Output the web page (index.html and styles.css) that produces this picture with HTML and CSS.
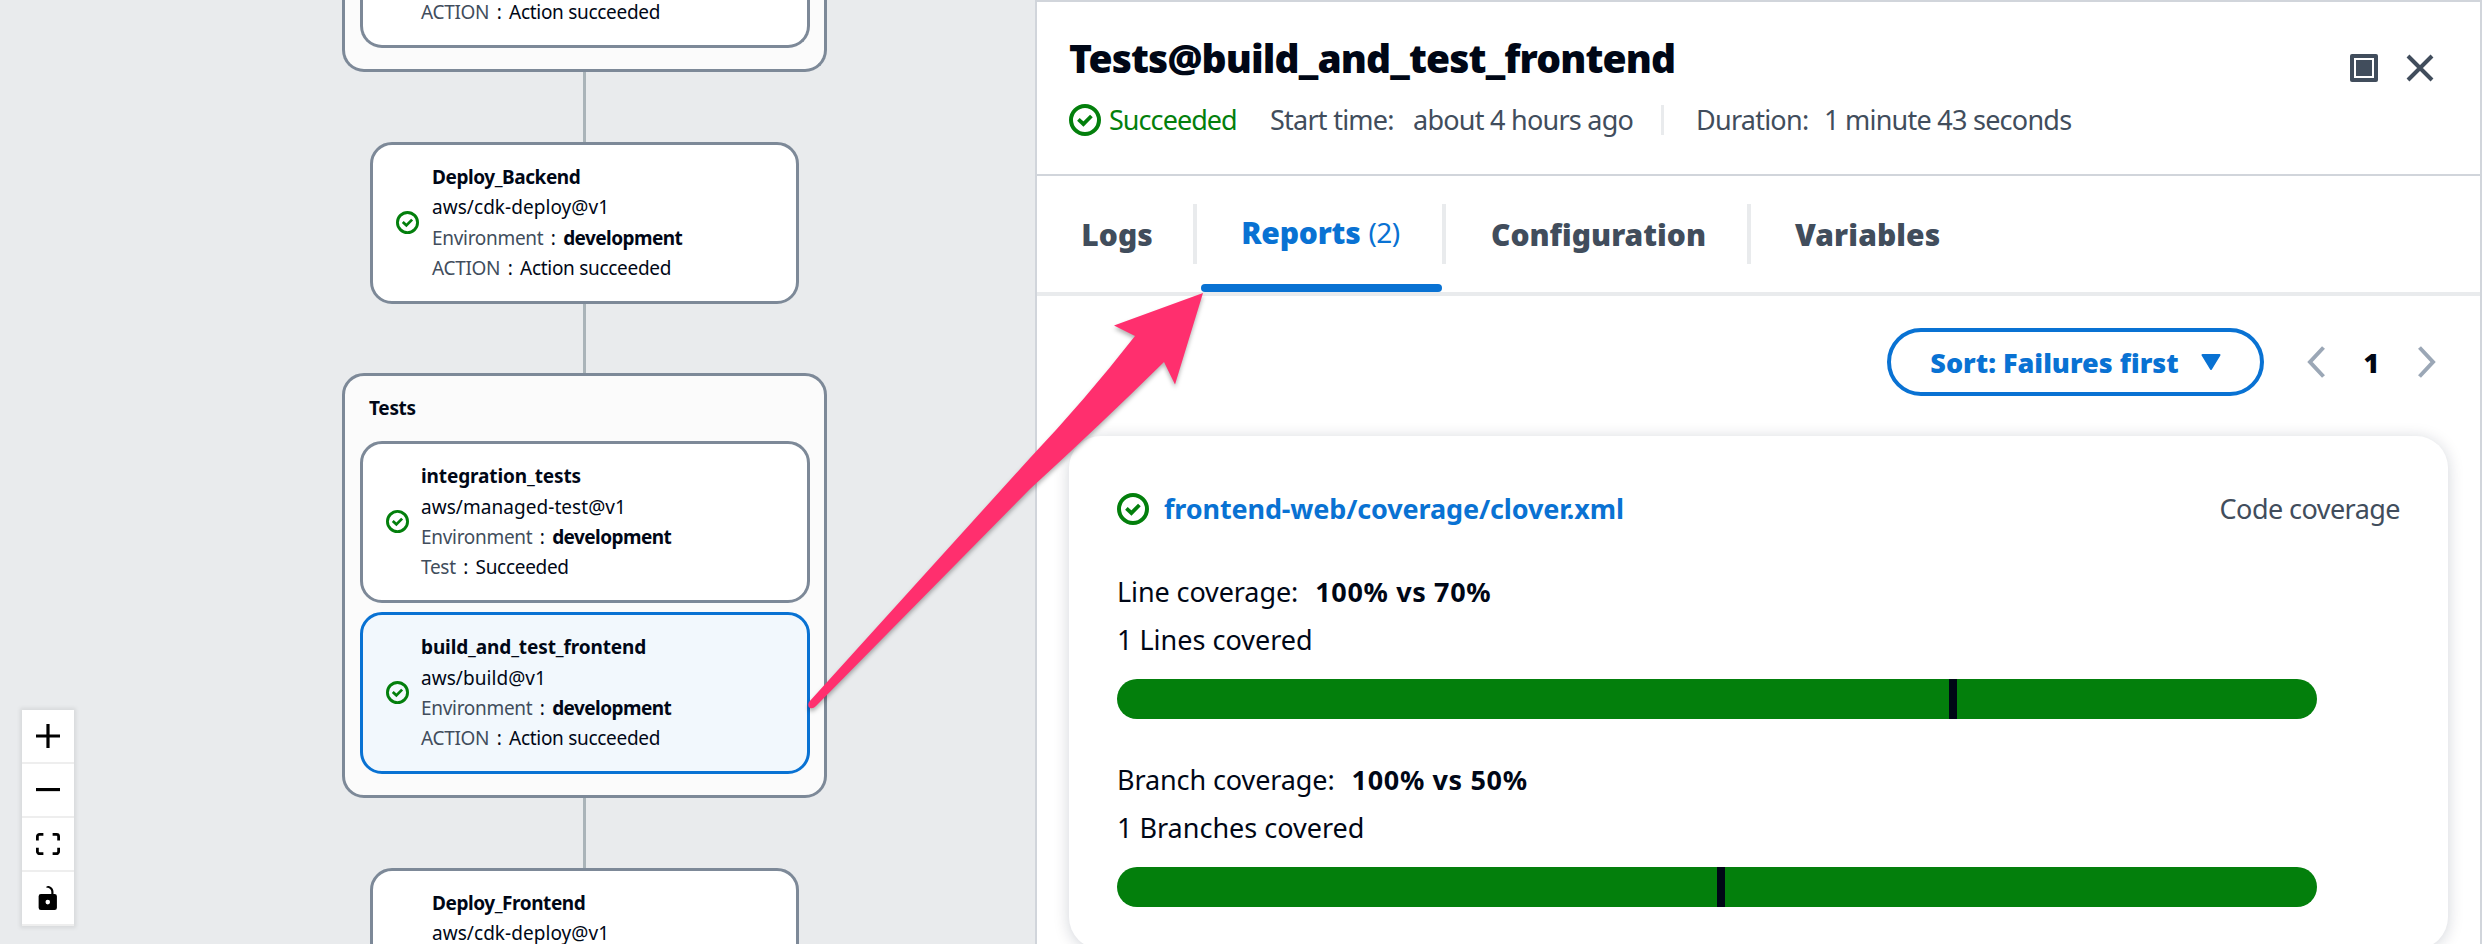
FILE: index.html
```html
<!DOCTYPE html>
<html lang="en">
<head>
    <meta charset="UTF-8">
    <meta name="viewport" content="width=device-width, initial-scale=1.0">
    <title>Workflow run - Tests@build_and_test_frontend</title>
    <link rel="stylesheet" href="styles.css">
</head>
<body>
    <svg class="symbols" width="0" height="0">
        <symbol id="success" viewBox="0 0 16 16">
            <circle cx="8" cy="8" r="7" fill="none" stroke="#037f0c" stroke-width="2"/>
            <path d="M4.700 7.700l2.500 2.300 4-4" fill="none" stroke="#037f0c" stroke-width="1.900"/>
        </symbol>
    </svg>

    <div class="graph">
        <div class="group group-clipped">
            <div class="node node-clipped">
                <div class="node-text">
                    <div><span class="key">ACTION</span><span class="colon">:</span>Action succeeded</div>
                </div>
            </div>
        </div>
        <div class="edge"></div>
        <div class="node node-single">
            <svg class="node-icon"><use href="#success"/></svg>
            <div class="node-text">
                <div class="name name-deploy">Deploy_Backend</div>
                <div class="action-id">aws/cdk-deploy@v1</div>
                <div><span class="key">Environment</span><span class="colon">:</span><b>development</b></div>
                <div><span class="key">ACTION</span><span class="colon">:</span>Action succeeded</div>
            </div>
        </div>
        <div class="edge edge-short"></div>
        <div class="group">
            <div class="group-title">Tests</div>
            <div class="node">
                <svg class="node-icon"><use href="#success"/></svg>
                <div class="node-text">
                    <div class="name">integration_tests</div>
                    <div class="action-id">aws/managed-test@v1</div>
                    <div><span class="key">Environment</span><span class="colon">:</span><b>development</b></div>
                    <div><span class="key">Test</span><span class="colon">:</span>Succeeded</div>
                </div>
            </div>
            <div class="node node-selected">
                <svg class="node-icon"><use href="#success"/></svg>
                <div class="node-text">
                    <div class="name">build_and_test_frontend</div>
                    <div class="action-id">aws/build@v1</div>
                    <div><span class="key">Environment</span><span class="colon">:</span><b>development</b></div>
                    <div><span class="key">ACTION</span><span class="colon">:</span>Action succeeded</div>
                </div>
            </div>
        </div>
        <div class="edge"></div>
        <div class="node node-single">
            <div class="node-text node-text-cut">
                <div class="name name-deploy">Deploy_Frontend</div>
                <div class="action-id">aws/cdk-deploy@v1</div>
            </div>
        </div>

        <div class="controls">
            <button><svg viewBox="0 0 32 32"><path d="M32 18.133H18.133V32h-4.266V18.133H0v-4.266h13.867V0h4.266v13.867H32z"/></svg></button>
            <button><svg viewBox="0 0 32 5"><path d="M0 0h32v4.2H0z"/></svg></button>
            <button><svg viewBox="0 0 32 30"><path d="M3.692 4.63c0-.53.4-.938.939-.938h5.215V0H4.708C2.13 0 0 2.054 0 4.63v5.216h3.692V4.631zM27.354 0h-5.2v3.692h5.17c.53 0 .984.4.984.939v5.215H32V4.631A4.624 4.624 0 0027.354 0zm.954 24.83c0 .532-.4.94-.939.94h-5.215v3.768h5.215c2.577 0 4.631-2.13 4.631-4.707v-5.139h-3.692v5.139zm-23.677.94c-.531 0-.939-.4-.939-.94v-5.138H0v5.139c0 2.577 2.13 4.707 4.708 4.707h5.138V25.77H4.631z"/></svg></button>
            <button><svg viewBox="0 0 25 32"><path d="M21.333 10.667H19.81V7.619C19.81 3.429 16.38 0 12.19 0c-4.114 1.828-1.37 2.133.305 2.438 1.676.305 4.42 2.59 4.42 5.181v3.048H3.047A3.056 3.056 0 000 13.714v15.238A3.056 3.056 0 003.048 32h18.285a3.056 3.056 0 003.048-3.048V13.714a3.056 3.056 0 00-3.048-3.047zM12.19 24.533a3.056 3.056 0 01-3.047-3.047 3.056 3.056 0 013.047-3.048 3.056 3.056 0 013.048 3.048 3.056 3.056 0 01-3.048 3.047z"/></svg></button>
        </div>
    </div>

    <div class="panel">
        <div class="panel-header">
            <div>
                <h1>Tests@build_and_test_frontend</h1>
                <div class="status">
                    <svg class="icon"><use href="#success"/></svg>
                    <span class="succeeded">Succeeded</span>
                    <span>Start time:</span>
                    <span>about 4 hours ago</span>
                    <span class="divider"></span>
                    <span>Duration:</span>
                    <span>1 minute 43 seconds</span>
                </div>
            </div>
            <div class="panel-actions">
                <svg width="28" height="28" viewBox="0 0 28 28"><rect width="28" height="28" rx="2" fill="#414d5c"/><rect x="5" y="5" width="18" height="18" fill="none" stroke="#fff" stroke-width="2"/></svg>
                <svg width="28" height="28" viewBox="0 0 28 28"><path d="M2 2l24 24M26 2L2 26" stroke="#414d5c" stroke-width="4"/></svg>
            </div>
        </div>

        <div class="tabs">
            <div class="tab tab-logs">Logs</div>
            <div class="tab tab-reports active">Reports<span class="count">(2)</span></div>
            <div class="tab tab-configuration">Configuration</div>
            <div class="tab tab-variables">Variables</div>
        </div>

        <div class="toolbar">
            <button class="sort">Sort: Failures first
                <svg width="20" height="16" viewBox="0 0 20 16"><path d="M1.5 1h17L10 15z" fill="#0972d3" stroke="#0972d3" stroke-width="2" stroke-linejoin="round"/></svg>
            </button>
            <div class="pager">
                <svg width="18" height="32" viewBox="0 0 18 32"><path d="M16.5 1.5L3 16l13.5 14.5" fill="none" stroke="#9ba7b6" stroke-width="4"/></svg>
                <span>1</span>
                <svg width="18" height="32" viewBox="0 0 18 32"><path d="M1.5 1.5L15 16 1.5 30.5" fill="none" stroke="#9ba7b6" stroke-width="4"/></svg>
            </div>
        </div>

        <div class="report">
            <div class="report-header">
                <svg class="icon"><use href="#success"/></svg>
                <a class="report-link">frontend-web/coverage/clover.xml</a>
                <span class="report-type">Code coverage</span>
            </div>
            <div class="coverage">
                <div><span class="coverage-label">Line coverage:</span><b>100% vs 70%</b></div>
                <div class="covered">1 Lines covered</div>
                <div class="bar"><div class="mark" style="left: 69.3%"></div></div>
            </div>
            <div class="coverage">
                <div><span class="coverage-label">Branch coverage:</span><b>100% vs 50%</b></div>
                <div class="covered">1 Branches covered</div>
                <div class="bar"><div class="mark" style="left: 50%"></div></div>
            </div>
        </div>
    </div>

    <!-- arrow from the selected action to its reports tab -->
    <svg class="arrow" width="420" height="440" viewBox="800 280 420 440">
        <path d="M1203 293L1114 325.5L1135 336Q1085 400 1030 458L809 702Q807 706 810 708Q813 709 816 706L1030 489Q1100 425 1164 362L1175 384.5Z"/>
    </svg>
</body>
</html>
```
FILE: styles.css
```css
* {
    box-sizing: border-box;
}
body {
    margin: 0;
    width: 2482px;
    height: 944px;
    display: flex;
    overflow: hidden;
    position: relative;
    font-family: "Noto Sans", "Open Sans", sans-serif;
    color: #000716;
    background: #e9ebed;
}
button {
    font: inherit;
    padding: 0;
    border: 0;
    background: #fff;
}
.symbols {
    position: absolute;
}

/* workflow graph */
.graph {
    width: 1035px;
    height: 944px;
    padding-left: 342px;
    padding-right: 208px;
    display: flex;
    flex-direction: column;
    align-items: center;
    overflow: hidden;
    position: relative;
    font-size: 19px;
    line-height: 30.3px;
    letter-spacing: -0.3px;
}
.group {
    width: 485px;
    height: 425px;
    flex-shrink: 0;
    padding: 17px 14px 0 15px;
    border: 3px solid #7d8998;
    border-radius: 22px;
    background: #fbfbfb;
}
.group-title {
    font-weight: 700;
    padding-left: 9px;
    margin-bottom: 18px;
}
.group-clipped {
    height: 72px;
    padding-top: 0;
    border-top: 0;
    border-top-left-radius: 0;
    border-top-right-radius: 0;
}
.node {
    height: 162px;
    flex-shrink: 0;
    display: flex;
    align-items: center;
    padding-left: 23px;
    padding-bottom: 1px;
    border: 3px solid #7d8998;
    border-radius: 22px;
    background: #fff;
}
.node + .node {
    margin-top: 9px;
}
.node-single {
    width: 429px;
}
.node-selected {
    border-color: #0972d3;
    background: #f2f8fd;
}
.node-clipped {
    height: 48px;
    align-items: flex-end;
    padding-left: 58px;
    padding-bottom: 18px;
    border-top: 0;
    border-top-left-radius: 0;
    border-top-right-radius: 0;
}
.node-icon {
    width: 23px;
    height: 23px;
    margin-right: 12px;
}
.node-single .node-icon {
    margin-right: 13px;
}
.node-text-cut {
    align-self: flex-start;
    padding: 17px 0 0 36px;
}
.name {
    font-weight: 700;
    letter-spacing: -0.12px;
}
.name-deploy {
    letter-spacing: -0.43px;
}
.action-id {
    letter-spacing: 0.05px;
}
.key {
    color: #414d5c;
}
.colon {
    margin: 0 7.5px;
}
.node-text b {
    letter-spacing: -0.55px;
}
.edge {
    width: 3px;
    height: 70px;
    flex-shrink: 0;
    background: #aab4b9;
}
.edge-short {
    height: 69px;
}

/* zoom controls over the canvas */
.controls {
    position: absolute;
    left: 22px;
    top: 710px;
    width: 52px;
    box-shadow: 0 0 4px 2px rgba(0, 0, 0, 0.08);
}
.controls button {
    width: 52px;
    height: 54px;
    display: flex;
    align-items: center;
    justify-content: center;
    border-bottom: 2px solid #eee;
}
.controls svg {
    width: 24px;
    max-height: 24px;
}

/* action details */
.panel {
    width: 1447px;
    height: 944px;
    overflow: hidden;
    border: 2px solid #d1d5db;
    border-bottom: 0;
    background: #fff;
    font-size: 27px;
}
.panel-header {
    height: 174px;
    display: flex;
    justify-content: space-between;
    padding: 32px 46px 0 32px;
    border-bottom: 2px solid #d1d5db;
}
h1 {
    margin: 0;
    font-size: 39px;
    line-height: 48px;
    font-weight: 900;
    letter-spacing: -0.86px;
}
.icon {
    width: 32px;
    height: 32px;
    flex-shrink: 0;
}
.status {
    display: grid;
    grid-template-columns: 40px 161px 143px 248px 35px 128px auto;
    align-items: center;
    margin-top: 22px;
    line-height: 32px;
    letter-spacing: -0.75px;
    color: #414d5c;
}
.succeeded {
    color: #037f0c;
    letter-spacing: -0.95px;
}
.divider {
    width: 3px;
    height: 30px;
    background: #e9ebed;
}
.panel-actions {
    display: flex;
    gap: 28px;
    padding-top: 20px;
}
.tabs {
    height: 120px;
    display: flex;
    border-bottom: 4px solid #e9ebed;
    font-size: 30px;
    font-weight: 900;
    color: #414d5c;
}
.tab {
    height: 116px;
    display: flex;
    align-items: center;
    justify-content: center;
    position: relative;
}
.tab + .tab::before {
    content: "";
    width: 4px;
    height: 60px;
    background: #e9ebed;
    position: absolute;
    left: -4px;
    top: 28px;
}
.tab-logs {
    width: 160px;
}
.tab-reports {
    width: 249px;
    padding: 0 2px 4px 0;
    letter-spacing: -0.2px;
}
.tab-configuration {
    width: 305px;
}
.tab-variables {
    padding-left: 44px;
    letter-spacing: 0.1px;
}
.active {
    color: #0972d3;
}
.active::after {
    content: "";
    position: absolute;
    left: 4px;
    right: 4px;
    bottom: 0;
    height: 8px;
    border-radius: 4px;
    background: #0972d3;
}
.count {
    margin-left: 8px;
    font-size: 28px;
    font-weight: 400;
    letter-spacing: -0.5px;
}
.toolbar {
    display: flex;
    justify-content: flex-end;
    align-items: center;
    height: 140px;
    padding: 0 44px 8px 0;
}
.sort {
    width: 377px;
    height: 68px;
    display: flex;
    align-items: center;
    justify-content: center;
    gap: 22px;
    border: 4px solid #0972d3;
    border-radius: 34px;
    color: #0972d3;
    font-weight: 900;
}
.pager {
    display: flex;
    align-items: center;
    margin-left: 43px;
    font-weight: 900;
}
.pager span {
    width: 93px;
    text-align: center;
}
.report {
    width: 1379px;
    height: 513px;
    margin-left: 32px;
    padding: 57px 48px 0;
    border-radius: 32px;
    background: #fff;
    box-shadow: 0 2px 16px rgba(0, 20, 50, 0.18);
}
.report-header {
    display: flex;
    align-items: center;
    height: 32px;
    margin-bottom: 43px;
}
.report-link,
.report-type {
    padding-bottom: 1px;
}
.report-link {
    margin-left: 15px;
    color: #0972d3;
    font-weight: 700;
    letter-spacing: -0.13px;
}
.report-type {
    margin-left: auto;
    color: #414d5c;
    letter-spacing: -0.55px;
}
.coverage {
    line-height: 48px;
    letter-spacing: -0.1px;
    margin-bottom: 37px;
}
.coverage-label {
    margin-right: 17px;
}
.coverage b {
    letter-spacing: 0.65px;
}
.covered {
    letter-spacing: 0;
}
.bar {
    width: 1200px;
    height: 40px;
    margin-top: 15px;
    border-radius: 20px;
    background: #037f0c;
    position: relative;
}
.mark {
    width: 8px;
    height: 40px;
    background: #000716;
    position: absolute;
    top: 0;
}
.arrow {
    position: absolute;
    left: 800px;
    top: 280px;
    fill: #ff2f6e;
    filter: drop-shadow(0 3px 2px rgba(0, 0, 0, 0.3));
}
```
